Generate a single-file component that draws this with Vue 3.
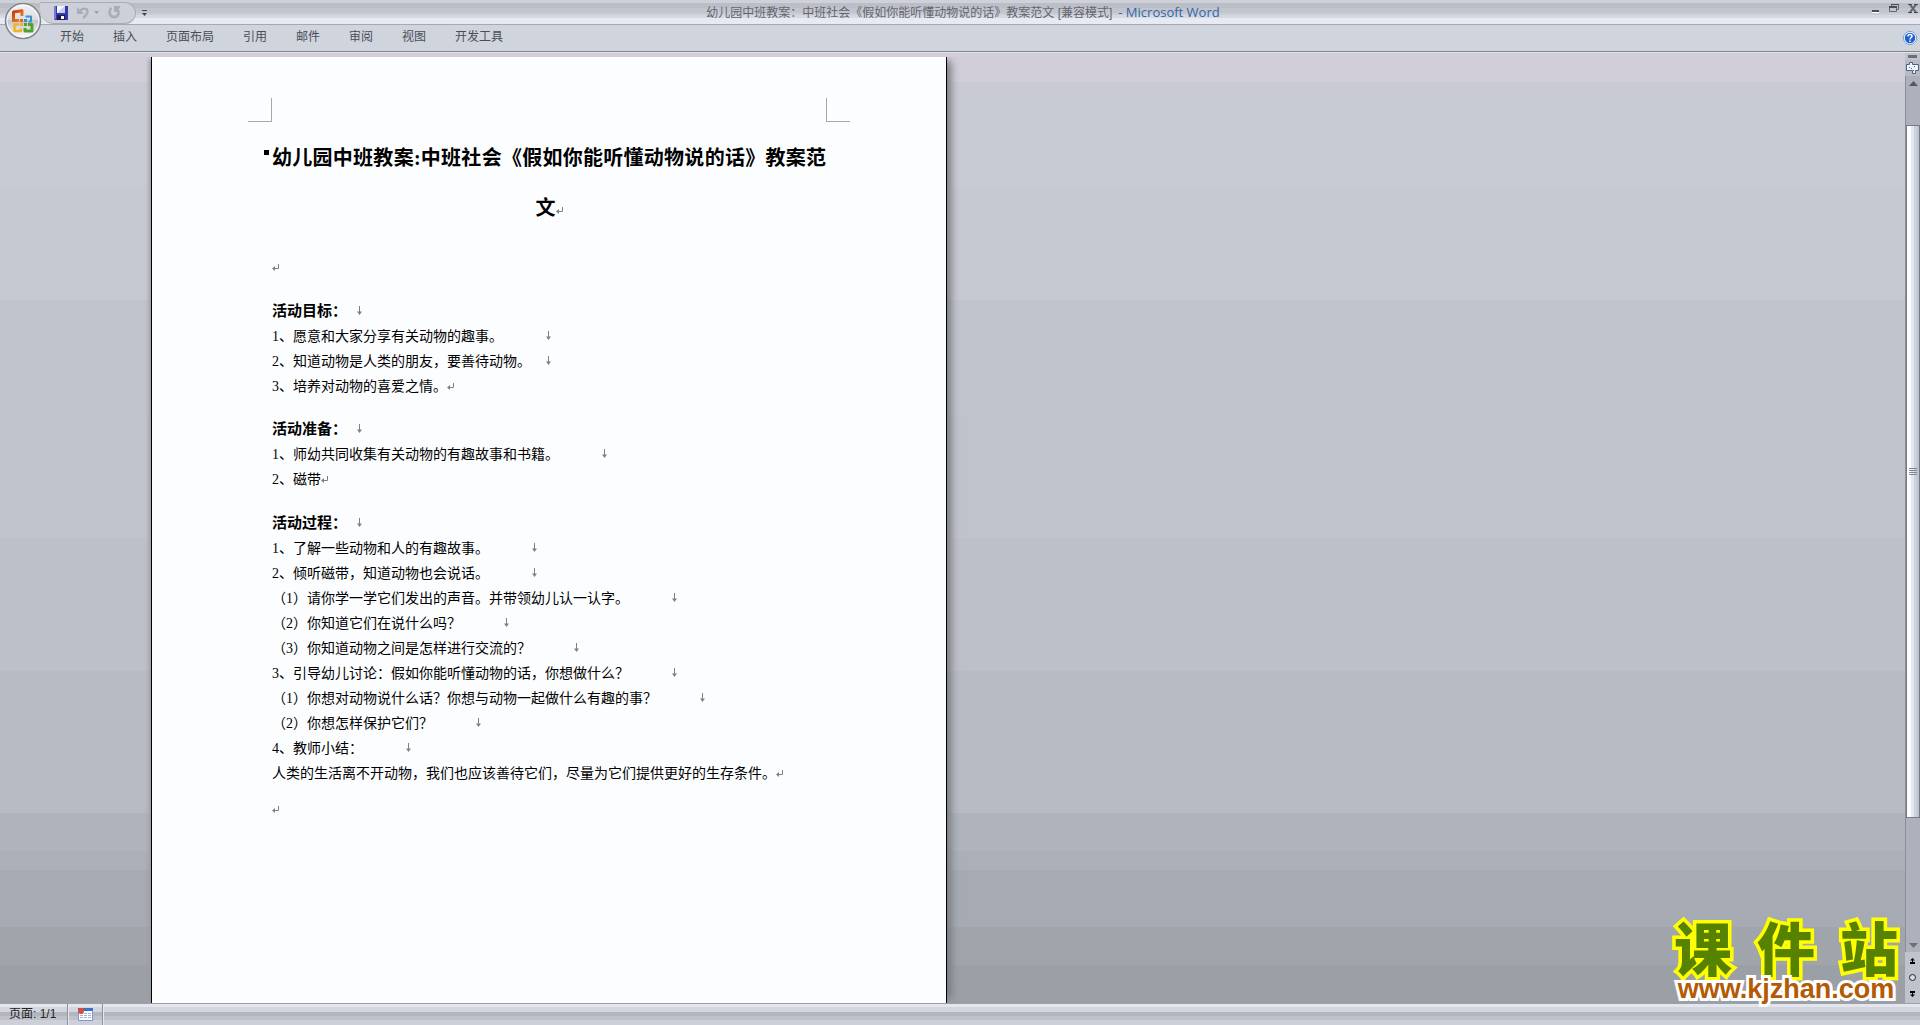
<script setup>
import { ref } from 'vue'

const tabs = ['开始', '插入', '页面布局', '引用', '邮件', '审阅', '视图', '开发工具']
const current = ref('')

// gap: wide = three blank characters, one = a single one, none = directly after the text
const sections = [
  {
    heading: '活动目标：',
    lines: [
      { text: '1、愿意和大家分享有关动物的趣事。', gap: 'wide', mark: 'line' },
      { text: '2、知道动物是人类的朋友，要善待动物。', gap: 'one', mark: 'line' },
      { text: '3、培养对动物的喜爱之情。', gap: 'none', mark: 'para' },
    ],
  },
  {
    heading: '活动准备：',
    lines: [
      { text: '1、师幼共同收集有关动物的有趣故事和书籍。', gap: 'wide', mark: 'line' },
      { text: '2、磁带', gap: 'none', mark: 'para' },
    ],
  },
  {
    heading: '活动过程：',
    lines: [
      { text: '1、了解一些动物和人的有趣故事。', gap: 'wide', mark: 'line' },
      { text: '2、倾听磁带，知道动物也会说话。', gap: 'wide', mark: 'line' },
      { text: '（1）请你学一学它们发出的声音。并带领幼儿认一认字。', gap: 'wide', mark: 'line' },
      { text: '（2）你知道它们在说什么吗？', gap: 'wide', mark: 'line' },
      { text: '（3）你知道动物之间是怎样进行交流的？', gap: 'wide', mark: 'line' },
      { text: '3、引导幼儿讨论：假如你能听懂动物的话，你想做什么？', gap: 'wide', mark: 'line' },
      { text: '（1）你想对动物说什么话？你想与动物一起做什么有趣的事？', gap: 'wide', mark: 'line' },
      { text: '（2）你想怎样保护它们？', gap: 'wide', mark: 'line' },
      { text: '4、教师小结：', gap: 'wide', mark: 'line' },
      { text: '人类的生活离不开动物，我们也应该善待它们，尽量为它们提供更好的生存条件。', gap: 'none', mark: 'para' },
    ],
  },
]
</script>

<template>
  <div class="app">
    <svg class="defs" aria-hidden="true">
      <symbol id="mark-line" viewBox="0 0 7 10">
        <path d="M3.5 0V7" stroke="#808080" fill="none" />
        <path d="M1 5.5H6L3.5 9Z" fill="#808080" />
      </symbol>
      <symbol id="mark-para" viewBox="0 0 7 8">
        <path d="M6.5 0V4.5H2" stroke="#808080" fill="none" />
        <path d="M0 4.5L3 2V7Z" fill="#808080" />
      </symbol>
    </svg>

    <button class="office" aria-label="Office">
      <svg width="38" height="38" viewBox="0 0 38 38">
        <defs>
          <linearGradient id="orb" x1="0" y1="0" x2="0" y2="1">
            <stop offset="0" stop-color="#f4f4f7" />
            <stop offset=".45" stop-color="#dcdde2" />
            <stop offset=".5" stop-color="#c3c5cc" />
            <stop offset="1" stop-color="#ffffff" />
          </linearGradient>
          <linearGradient id="red" x1="0" y1="0" x2="1" y2="1">
            <stop offset="0" stop-color="#c93a06" />
            <stop offset="1" stop-color="#f08a34" />
          </linearGradient>
        </defs>
        <circle cx="19" cy="19" r="17.5" fill="url(#orb)" stroke="#85878e" stroke-width="1.5" />
        <circle cx="19" cy="19" r="16" fill="none" stroke="#fff" opacity=".8" />
        <g fill="none" stroke-linejoin="round">
          <path d="M15 18.5H9.5V10L18 8.800V14" stroke="url(#red)" stroke-width="3" />
          <path d="M21.500 14.500H27V19.500H24.500" stroke="#3a8fd9" stroke-width="2" />
          <path d="M15 22.500H10.500V29H17V26.500" stroke="#f2b41c" stroke-width="2.500" />
          <path d="M21 26V29H28V22.500H24" stroke="#4ea32a" stroke-width="3" />
        </g>
        <path d="M16 17H19V20H16Z" fill="#e8641b" />
        <path d="M20 17H23V20H20Z" fill="#3a8fd9" />
        <path d="M16 21H19V24H16Z" fill="#f2b41c" />
        <path d="M20 21H23V24H20Z" fill="#4ea32a" />
      </svg>
    </button>

    <header class="titlebar">
      <div class="left">
        <div class="quick">
          <button aria-label="保存">
            <svg width="14" height="14" viewBox="0 0 14 14">
              <path d="M0 0H14V14H1L0 13Z" fill="#3538a8" />
              <path d="M0 0H2V13H0Z" fill="#6f78dc" />
              <path d="M3 0H11V7H3Z" fill="#f4f6ff" />
              <path d="M7 3L11 0V7H4Z" fill="#c3cdf3" />
              <path d="M3 9H11V14H3Z" fill="#1b1d4e" />
              <path d="M7 10H10V13H7Z" fill="#fff" />
            </svg>
          </button>
          <button class="undo" aria-label="撤消">
            <svg width="13" height="13" viewBox="0 0 13 13">
              <path d="M3 5C5 2 10.5 1.500 10.500 5.500C10.500 8 9 9.500 6 12" fill="none" stroke="#a9adb9" stroke-width="2.400" />
              <path d="M0 1V8H7Z" fill="#a9adb9" />
            </svg>
          </button>
          <button class="caret" aria-label="撤消列表">
            <svg width="5" height="3" viewBox="0 0 5 3"><path d="M0 0H5L2.5 3Z" fill="#9b9fab" /></svg>
          </button>
          <button class="redo" aria-label="重复">
            <svg width="13" height="13" viewBox="0 0 13 13">
              <path d="M3.500 2C0 5 1.500 11 6 11C10.500 11 12 6 9 3.500" fill="none" stroke="#a9adb9" stroke-width="2.600" />
              <path d="M6 0H12V1.500L9 6H6Z" fill="#a9adb9" />
            </svg>
          </button>
        </div>
        <button class="more" aria-label="自定义快速访问工具栏">
          <svg width="5" height="6" viewBox="0 0 5 6">
            <path d="M0 0H5V1H0ZM0 3H5L2.5 6Z" fill="#44464e" />
          </svg>
        </button>
      </div>
      <h1 class="caption">幼儿园中班教案：中班社会《假如你能听懂动物说的话》教案范文 [兼容模式]<span>- Microsoft Word</span></h1>
      <div class="window">
        <button aria-label="最小化">
          <svg width="8" height="10" viewBox="0 0 8 10"><path d="M0 6H7V8H0Z" fill="#4b4d55" /><path d="M0 8H7V9H0Z" fill="#fff" /></svg>
        </button>
        <button aria-label="还原">
          <svg width="10" height="10" viewBox="0 0 10 10">
            <path d="M2.5 2V.5H9.5V5.5H7.5M.5 2.5H7.5V7.5H.5Z" fill="none" stroke="#666a78" />
            <path d="M2 0H10V1H2ZM0 2H8V4H0Z" fill="#4b4d55" />
          </svg>
        </button>
        <button aria-label="关闭">
          <svg width="10" height="10" viewBox="0 0 10 10">
            <path d="M1.5 0L8.500 9M8.500 0L1.500 9" stroke="#5f6476" stroke-width="2" />
            <path d="M0 .5H4M6 .5H10M0 8.5H4M6 8.5H10" stroke="#4b4d55" />
          </svg>
        </button>
      </div>
    </header>

    <nav class="tabs">
      <button v-for="t in tabs" :key="t" :aria-pressed="current === t" @click="current = t">{{ t }}</button>
      <button class="help" aria-label="帮助">
        <svg width="14" height="14" viewBox="0 0 14 14">
          <circle cx="7" cy="7" r="6.5" fill="#fff" stroke="#6c9be0" />
          <circle cx="7" cy="7" r="5.2" fill="#1f5fd0" />
          <path d="M5 5.5C5 2.8 9 3 9 5.2C9 6.7 7 6.6 7 8.5M7 9.5V11" fill="none" stroke="#fff" stroke-width="1.5" />
        </svg>
      </button>
    </nav>

    <div class="work">
      <main class="canvas">
        <article class="page">
          <div class="corners"><i class="corner start"></i><i class="corner end"></i></div>
          <div class="body">
            <h2 class="title">幼儿园中班教案:中班社会《假如你能听懂动物说的话》教案范文<svg class="para"><use href="#mark-para" /></svg></h2>
            <p class="blank"><svg class="para"><use href="#mark-para" /></svg></p>
            <section v-for="s in sections" :key="s.heading">
              <h3>{{ s.heading }}<svg class="line"><use href="#mark-line" /></svg></h3>
              <p v-for="l in s.lines" :key="l.text">{{ l.text }}<svg :class="[l.mark, l.gap]"><use :href="'#mark-' + l.mark" /></svg></p>
            </section>
            <p class="last"><svg class="para"><use href="#mark-para" /></svg></p>
          </div>
        </article>
      </main>

      <aside class="scroll">
        <div class="split"></div>
        <button class="ruler" aria-label="标尺">
          <svg width="13" height="12" viewBox="0 0 13 12">
            <path d="M.5 2.5H3.5V.5H6.5V2.5H12.5V8.5H9.5V11.5H6.5V8.5H.5Z" fill="#f3f4fb" stroke="#4d6280" />
            <path d="M3 5.5H4M5 6.500H6M8 4.500H9M7 8.500H8" stroke="#4d6280" />
          </svg>
        </button>
        <div class="track">
          <div class="before">
            <svg width="9" height="5" viewBox="0 0 9 5"><path d="M4.5 0L9 5H0Z" fill="#555861" /></svg>
          </div>
          <div class="thumb"><i></i><i></i><i></i><i></i></div>
          <div class="after">
            <svg width="9" height="5" viewBox="0 0 9 5"><path d="M0 0H9L4.5 5Z" fill="#6c707b" /></svg>
          </div>
        </div>
        <div class="browse">
          <button aria-label="前一页">
            <svg width="5" height="6" viewBox="0 0 5 6"><path d="M2.5 0L5 2.5H3V4H5V6H0V4H2V2.5H0Z" fill="#000" /></svg>
          </button>
          <button aria-label="选择浏览对象">
            <svg width="7" height="7" viewBox="0 0 7 7"><circle cx="3.5" cy="3.5" r="3" fill="#d9dadd" stroke="#222" /></svg>
          </button>
          <button aria-label="下一页">
            <svg width="5" height="6" viewBox="0 0 5 6"><path d="M0 0H5V2H3V3.5H5L2.5 6L0 3.5H2V2H0Z" fill="#000" /></svg>
          </button>
        </div>
      </aside>

      <a class="brand" href="#">
        <span class="name"><b>课</b><b>件</b><b>站</b></span>
        <span class="url">www.kjzhan.com</span>
      </a>
    </div>

    <footer class="status">
      <span class="pages">页面: 1/1</span>
      <button class="macro" aria-label="录制宏">
        <svg width="15" height="13" viewBox="0 0 15 13">
          <path d="M.5 .5H14.5V12.5H.5Z" fill="#fff" stroke="#7c9ad0" />
          <path d="M0 0H15V3H0Z" fill="#3f6fc9" />
          <path d="M2 5.5H13M2 7.5H13M2 9.5H13" stroke="#9db4de" />
          <path d="M5.5 4V11M9.5 4V11" stroke="#fff" />
          <circle cx="3" cy="3" r="3" fill="#d9512c" />
        </svg>
      </button>
      <span class="rest"></span>
    </footer>
  </div>
</template>

<style>
body {
  margin: 0;
}
</style>

<style scoped>
.app {
  position: relative;
  display: flex;
  flex-direction: column;
  min-height: 100vh;
  box-sizing: border-box;
  font-family: "Liberation Sans", "Noto Sans CJK SC", sans-serif;
  font-size: 12px;
  color: #4a4d57;
  background: #d0d4dd;
}
.defs {
  position: absolute;
  width: 0;
  height: 0;
}
button {
  display: flex;
  padding: 0;
  border: 0;
  background: none;
  font: inherit;
  color: inherit;
}
svg {
  display: block;
}
.office {
  position: absolute;
  left: 4px;
  top: 2px;
  z-index: 2;
}
.titlebar {
  display: grid;
  grid-template-columns: 1fr auto 1fr;
  height: 24px;
  border-bottom: 1px solid #a5a9b3;
  background: linear-gradient(#cfd1d9 0 3px, #bcbec7 3px 8px, #c2c5ce 8px 13px, #cbced7 13px 15px, #d6d9e1 15px 18px, #e7eaf2 18px);
}
.left {
  display: flex;
  align-items: center;
}
.quick {
  display: flex;
  align-items: center;
  box-sizing: border-box;
  width: 96px;
  height: 22px;
  margin-left: 40px;
  padding-left: 14px;
  border: 1px solid #a9acb6;
  border-left: 0;
  border-radius: 0 11px 11px 14px;
  background: #cdd0d9;
}
.undo {
  margin-left: 9px;
}
.caret {
  margin-left: 4px;
}
.redo {
  margin-left: 9px;
}
.more {
  margin-left: 6px;
}
.caption {
  margin: 0;
  padding-left: 6px;
  font-size: 12px;
  font-weight: 400;
  line-height: 24px;
  color: #62656e;
  text-spacing-trim: space-all;
}
.caption span {
  margin-left: 6px;
  font-family: "Open Sans", sans-serif;
  font-size: 13px;
  color: #2f67a8;
}
.window {
  display: flex;
  justify-content: flex-end;
  gap: 9px;
  padding: 4px 2px 0 0;
  align-items: flex-start;
}
.tabs {
  display: flex;
  align-items: center;
  gap: 29px;
  height: 26px;
  padding: 0 3px 0 60px;
  border-bottom: 1px solid #81848c;
}
.tabs button {
  line-height: 22px;
  padding-bottom: 2px;
}
.tabs .help {
  margin-left: auto;
  padding: 0;
}
.work {
  position: relative;
  display: flex;
  flex: 1;
  border-top: 1px solid #e3e3ea;
  background: linear-gradient(
    #d1ceda 0 3%,
    #c9cbd4 3% 14%,
    #c7c9d2 14% 26%,
    #c1c4cd 26% 38%,
    #c0c3cc 38% 51%,
    #bdc0c9 51% 65%,
    #b8bbc4 65% 80%,
    #afb3bc 80% 84%,
    #abafb8 84% 86%,
    #a6aab3 86% 92%,
    #a0a4ab 92% 96%,
    #9ba0a6 96%
  );
}
.canvas {
  flex: 1;
  display: flex;
  padding: 4px 0 0 151px;
}
.page {
  width: 794px;
  border: solid #000;
  border-width: 0 1px;
  background: #fcfdff;
  box-shadow: 8px 0 8px -4px #74777f, -4px 0 4px -2px #9a9ca8;
  clip-path: inset(0 -16px 0 -6px);
}
.corners {
  display: flex;
  justify-content: space-between;
  padding: 41px 96px 0;
}
.corner {
  box-sizing: border-box;
  width: 24px;
  height: 24px;
  border-bottom: 1px solid #a6a8ac;
}
.start {
  border-right: 1px solid #a6a8ac;
}
.end {
  border-left: 1px solid #a6a8ac;
}
.body {
  padding: 11px 120px 24px;
  font-family: "Liberation Serif", "Noto Sans CJK SC", serif;
  font-size: 14px;
  line-height: 25px;
  color: #000;
  text-spacing-trim: space-all;
}
.body svg {
  display: inline-block;
}
.line {
  width: 7px;
  height: 10px;
}
.para {
  width: 7px;
  height: 8px;
}
.wide {
  margin-left: 42px;
}
.one {
  margin-left: 14px;
}
h2,
h3,
p {
  margin: 0;
}
.title {
  position: relative;
  font-size: 20px;
  font-weight: 700;
  line-height: 50px;
  text-align: justify;
  text-align-last: center;
}
.title::before {
  content: "";
  position: absolute;
  left: -8px;
  top: 17px;
  width: 5px;
  height: 5px;
  background: #000;
}
.blank {
  margin: 22px 0 19px;
}
section {
  margin-bottom: 19px;
}
section:first-of-type {
  margin-bottom: 18px;
}
h3 {
  font-size: 15px;
  font-weight: 700;
}
h3 svg {
  margin-left: 9px;
}
.last {
  margin-top: -8px;
}
.scroll {
  display: flex;
  flex-direction: column;
  width: 15px;
  background: #c0c3cc;
}
.split {
  height: 3px;
  margin: 2px 3px;
  background: #6c6e76;
}
.ruler {
  padding: 2px 1px;
  background: #b8bbc5;
}
.track {
  flex: 1;
  display: flex;
  flex-direction: column;
  border-left: 1px solid #8c8f98;
  background: #aeb1bb;
}
.before,
.after {
  display: flex;
  justify-content: center;
}
.before {
  flex: 44;
  padding-top: 5px;
}
.after {
  flex: 131;
  align-items: flex-end;
  padding-bottom: 4px;
}
.thumb {
  flex: 698;
  display: flex;
  flex-direction: column;
  align-items: center;
  justify-content: center;
  gap: 1px;
  border: 1px solid #777a82;
  background: linear-gradient(90deg, #fdfdff 0 4px, #e4e7f1 4px 7px, #ccd1de 7px 10px, #bfc4d0 10px);
}
.thumb i {
  width: 8px;
  height: 1px;
  background: #82858e;
}
.browse {
  display: flex;
  flex-direction: column;
  align-items: center;
  gap: 10px;
  padding: 6px 0;
}
.brand {
  position: absolute;
  right: 20px;
  bottom: 0;
  display: flex;
  flex-direction: column;
  width: 228px;
  text-decoration: none;
  paint-order: stroke fill;
}
.name {
  display: flex;
  justify-content: space-between;
  padding: 0 2px;
  font-size: 58px;
  line-height: 48px;
  color: #568200;
  -webkit-text-stroke: 7px #ffff00;
}
.name b {
  font-weight: 900;
}
.url {
  position: relative;
  text-align: center;
  font-size: 27px;
  font-weight: 700;
  line-height: 28px;
  color: #b25a06;
  -webkit-text-stroke: 6px #fff;
}
.status {
  display: flex;
  height: 21px;
  border-top: 1px solid #9da0a8;
  background: linear-gradient(#e4e6ed 0 3px, #d3d6de 3px 8px, #b3b6bf 8px 12px, #bfc2cb 12px 16px, #cdd0d9 16px);
  color: #222;
  line-height: 21px;
}
.pages {
  width: 58px;
  padding-left: 9px;
  border-right: 1px solid #8e919a;
}
.macro {
  align-items: center;
  padding: 0 9px;
  border-left: 1px solid #e8eaf0;
  border-right: 1px solid #8e919a;
}
.rest {
  flex: 1;
  border-left: 1px solid #e8eaf0;
}
</style>
